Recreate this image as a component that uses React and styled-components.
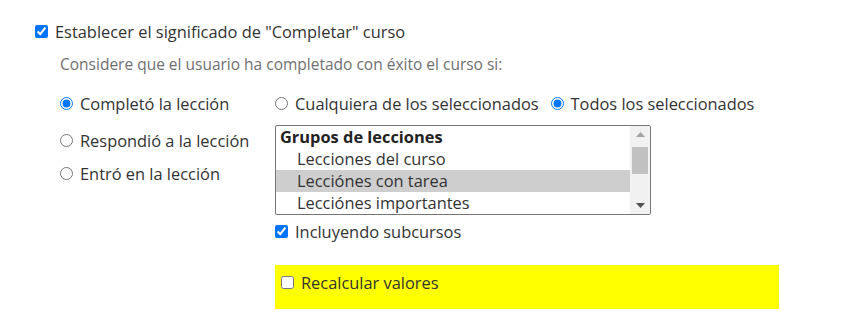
import React, { useState } from 'react';
import styled, { createGlobalStyle } from 'styled-components';

const GlobalStyle = createGlobalStyle`
  html, body {
    margin: 0;
    padding: 0;
    background: #fff;
  }
  body {
    font-family: "Open Sans", Lato, "Liberation Sans", sans-serif;
    font-size: 16.4px;
    color: #333;
  }
`;

const Page = styled.div`
  width: 842px;
  height: 320px;
  box-sizing: border-box;
  padding: 20px 0 0 31px;
`;

const Row = styled.label`
  display: flex;
  align-items: center;
  height: 22px;
  white-space: nowrap;
  cursor: pointer;
`;

const Box = styled.input`
  width: 13px;
  height: 13px;
  margin: 0 7px 0 4px;
  flex: none;
`;

const Radio = styled.input.attrs({ type: 'radio' })`
  width: 13px;
  height: 13px;
  margin: 0 7px 0 0;
  flex: none;
`;

const Section = styled.div`
  padding-left: 29px;
`;

const Hint = styled.p`
  margin: 11px 0 0;
  color: #6f6f6f;
  font-size: 15.5px;
  line-height: 22px;
`;

const Options = styled.div`
  display: flex;
  margin-top: 17px;
`;

const LeftColumn = styled.div`
  width: 215px;
  display: flex;
  flex-direction: column;
`;

const LeftRadio = styled(Row)`
  margin-top: ${p => p.$top || 0}px;
`;

const RightColumn = styled.div`
  display: flex;
  flex-direction: column;
`;

const InlineRadios = styled.div`
  display: flex;
  gap: 12px;
`;

const ListBox = styled.div`
  display: flex;
  width: 376px;
  height: 90px;
  box-sizing: border-box;
  margin-top: 11px;
  border: 1px solid #767676;
  border-radius: 2px;
  overflow: hidden;
`;

const List = styled.div`
  flex: 1;
`;

const Item = styled.div`
  height: 22px;
  line-height: 22px;
  padding-left: ${p => (p.$group ? 4 : 21)}px;
  font-weight: ${p => (p.$group ? 700 : 400)};
  color: ${p => (p.$group ? '#222' : '#333')};
  background: ${p => (p.$selected ? '#cecece' : 'transparent')};
  white-space: nowrap;
`;

const ScrollTrack = styled.div`
  width: 20px;
  background: #f1f1f1;
  display: flex;
  flex-direction: column;
  align-items: center;
`;

const Arrow = styled.div`
  height: 17px;
  display: flex;
  align-items: center;
  justify-content: center;
`;

const Thumb = styled.div`
  width: 16px;
  height: 27px;
  margin-top: 4px;
  background: #c1c1c1;
`;

const Spacer = styled.div`
  flex: 1;
`;

const Indent = styled(Row)`
  margin-top: 5px;
`;

const Highlight = styled.div`
  width: 504px;
  height: 44px;
  box-sizing: border-box;
  margin-top: 23px;
  padding: 6px 0 0 2px;
  background: #ffff00;
`;

const groups = [
  { label: 'Lecciones del curso' },
  { label: 'Lecciónes con tarea', selected: true },
  { label: 'Lecciónes importantes' },
];

export default function App() {
  const [mode, setMode] = useState('completed');
  const [match, setMatch] = useState('all');
  const [recalc, setRecalc] = useState(false);

  return (
    <Page>
      <GlobalStyle />
      <Row>
        <Box type="checkbox" defaultChecked />
        Establecer el significado de "Completar" curso
      </Row>
      <Section>
        <Hint>Considere que el usuario ha completado con éxito el curso si:</Hint>
        <Options>
          <LeftColumn>
            <LeftRadio>
              <Radio name="mode" checked={mode === 'completed'} onChange={() => setMode('completed')} />
              Completó la lección
            </LeftRadio>
            <LeftRadio $top={15}>
              <Radio name="mode" checked={mode === 'answered'} onChange={() => setMode('answered')} />
              Respondió a la lección
            </LeftRadio>
            <LeftRadio $top={11}>
              <Radio name="mode" checked={mode === 'entered'} onChange={() => setMode('entered')} />
              Entró en la lección
            </LeftRadio>
          </LeftColumn>
          <RightColumn>
            <InlineRadios>
              <Row>
                <Radio name="match" checked={match === 'any'} onChange={() => setMatch('any')} />
                Cualquiera de los seleccionados
              </Row>
              <Row>
                <Radio name="match" checked={match === 'all'} onChange={() => setMatch('all')} />
                Todos los seleccionados
              </Row>
            </InlineRadios>
            <ListBox>
              <List>
                <Item $group>Grupos de lecciones</Item>
                {groups.map(g => (
                  <Item key={g.label} $selected={g.selected}>{g.label}</Item>
                ))}
              </List>
              <ScrollTrack>
                <Arrow>
                  <svg width="9" height="5" viewBox="0 0 9 5"><path d="M0 5L4.5 0L9 5Z" fill="#a3a3a3" /></svg>
                </Arrow>
                <Thumb />
                <Spacer />
                <Arrow>
                  <svg width="9" height="5" viewBox="0 0 9 5"><path d="M0 0L9 0L4.5 5Z" fill="#505050" /></svg>
                </Arrow>
              </ScrollTrack>
            </ListBox>
            <Indent>
              <Box type="checkbox" defaultChecked style={{ marginLeft: 0 }} />
              Incluyendo subcursos
            </Indent>
            <Highlight>
              <Row>
                <Box type="checkbox" checked={recalc} onChange={e => setRecalc(e.target.checked)} />
                Recalcular valores
              </Row>
            </Highlight>
          </RightColumn>
        </Options>
      </Section>
    </Page>
  );
}
